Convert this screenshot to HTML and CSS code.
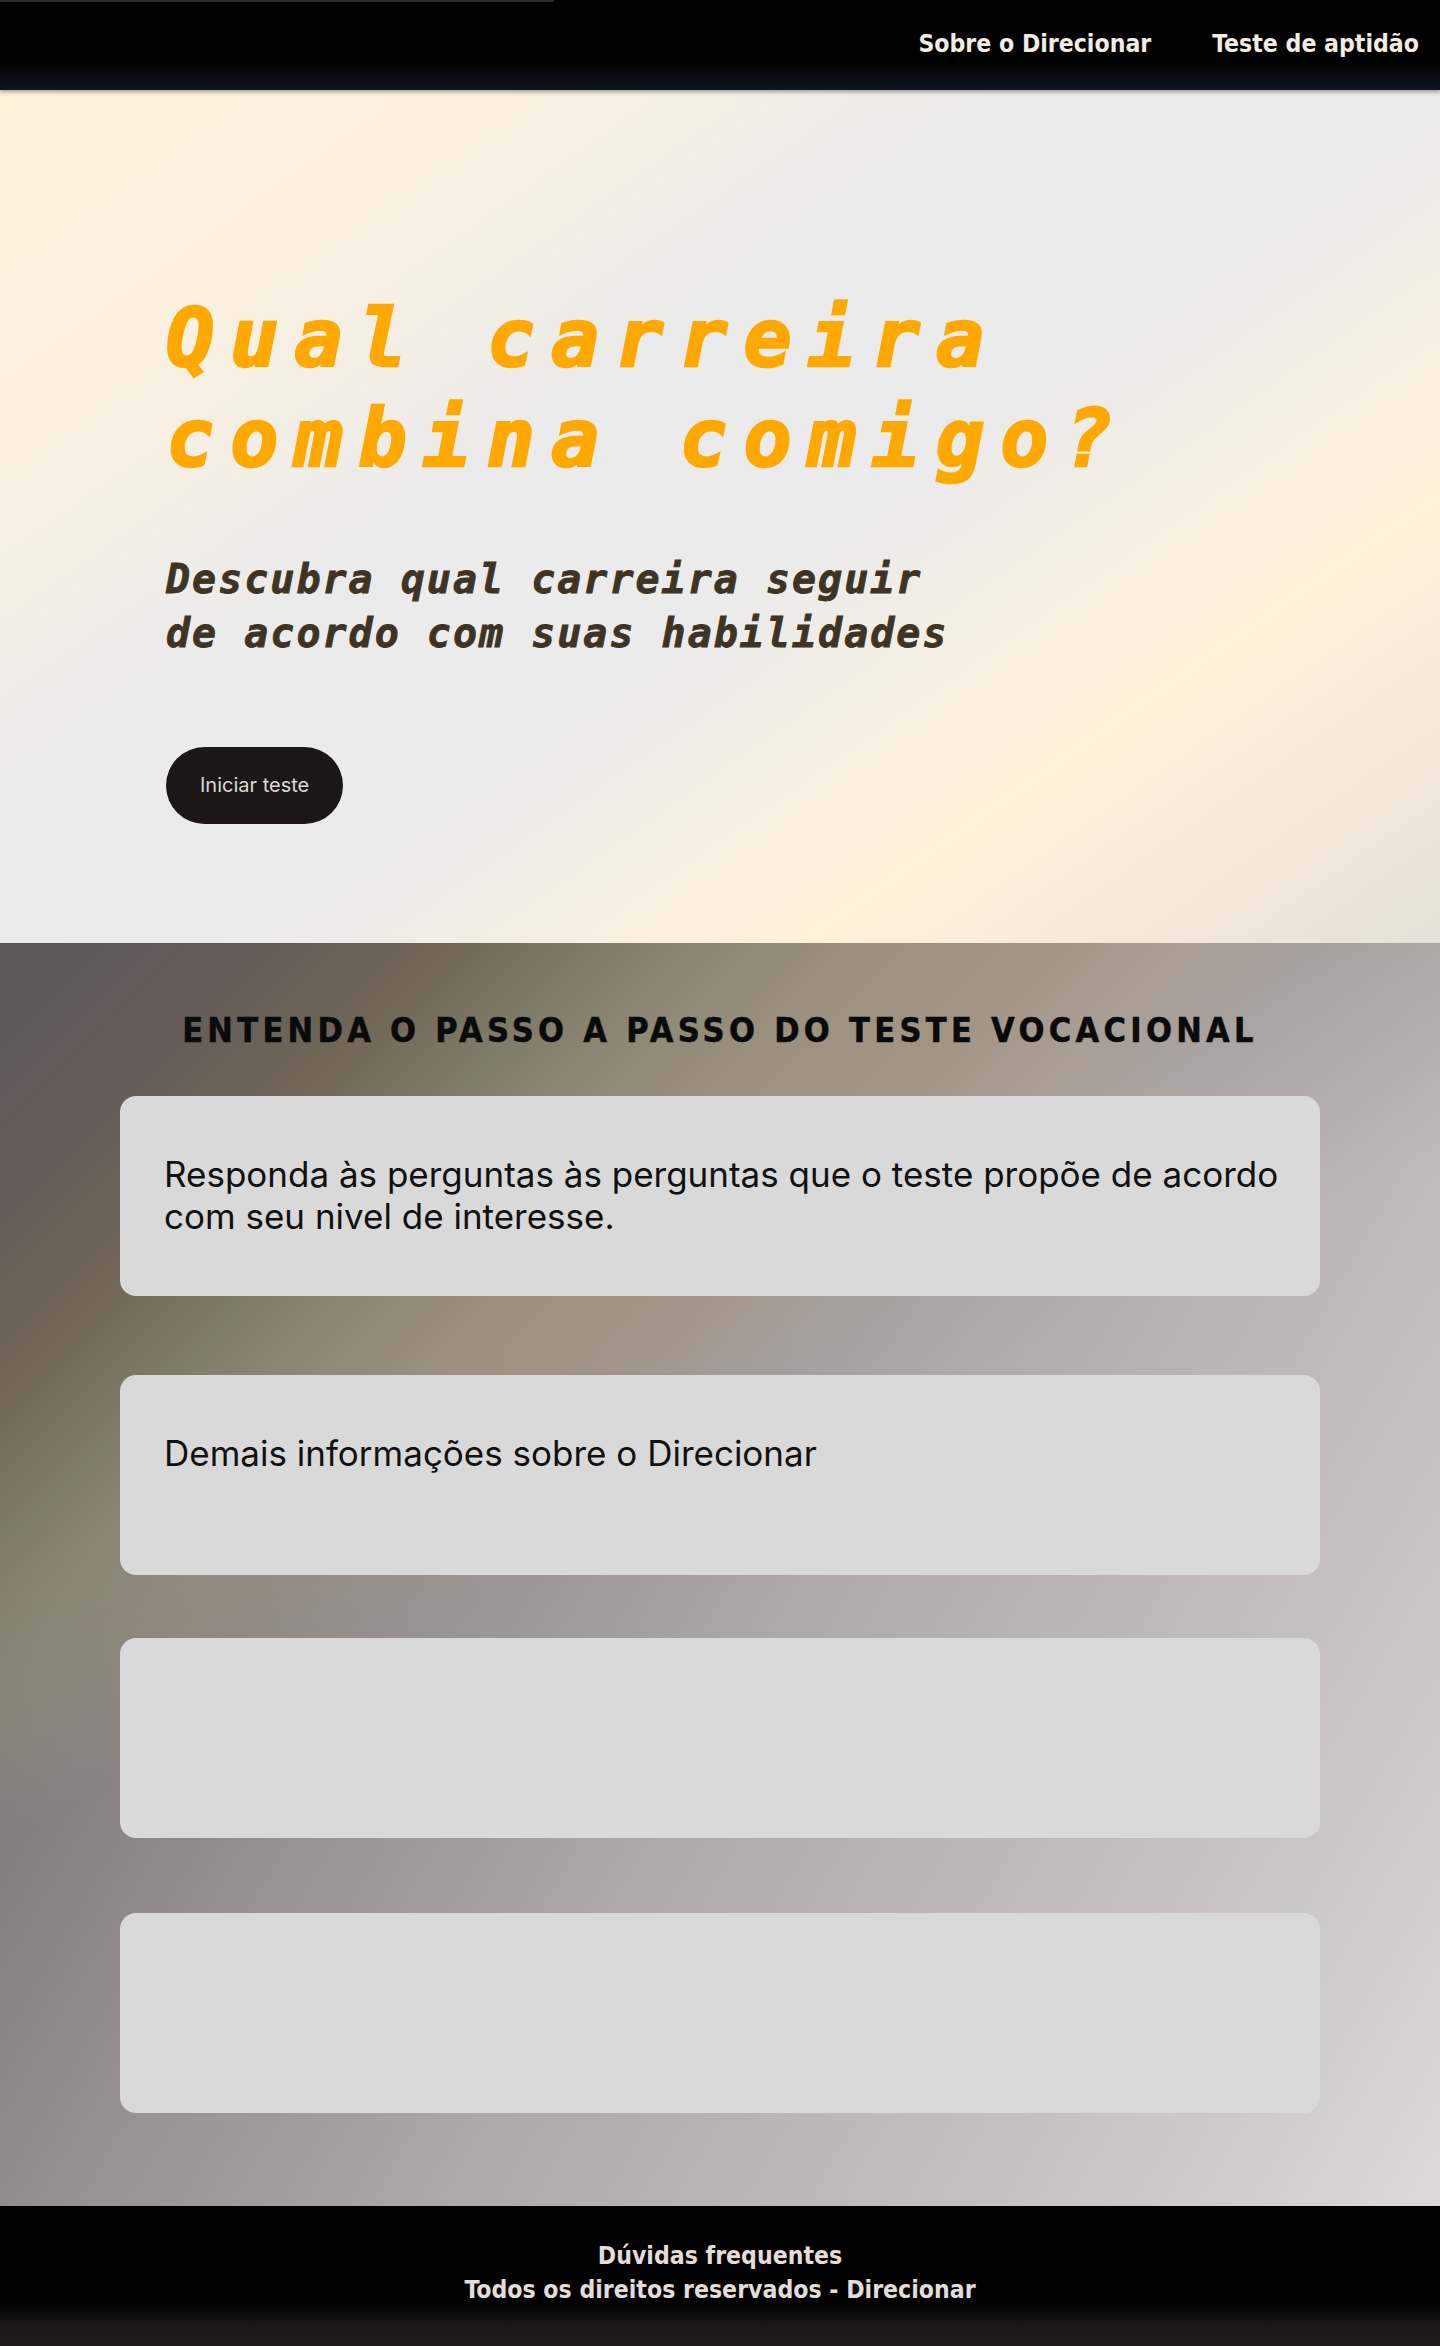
FILE: index.html
```html
<!DOCTYPE html>
<html lang="pt-BR">
<head>
    <meta charset="UTF-8">
    <meta name="viewport" content="width=device-width, initial-scale=1.0">
    <title>Direcionar - Teste vocacional</title>
    <link rel="stylesheet" href="styles.css">
</head>
<body>
    <header class="topbar">
        <div class="topbar-line"></div>
        <nav class="nav">
            <a href="#sobre">Sobre o Direcionar</a>
            <a href="#teste">Teste de aptidão</a>
        </nav>
    </header>

    <main>
        <section class="hero" id="teste">
            <h1 class="hero-title">Qual carreira<br>combina comigo?</h1>
            <p class="hero-sub">Descubra qual carreira seguir<br>de acordo com suas habilidades</p>
            <a class="btn-start" href="#">Iniciar teste</a>
        </section>

        <section class="steps" id="sobre">
            <h2>ENTENDA O PASSO A PASSO DO TESTE VOCACIONAL</h2>
            <div class="step-list">
                <div class="step">
                    <p>Responda às perguntas às perguntas que o teste propõe de acordo com seu nivel de interesse.</p>
                </div>
                <div class="step">
                    <p>Demais informações sobre o Direcionar</p>
                </div>
                <div class="step"></div>
                <div class="step"></div>
            </div>
        </section>
    </main>

    <footer class="footer">
        <p>Dúvidas frequentes</p>
        <p>Todos os direitos reservados - Direcionar</p>
    </footer>
</body>
</html>
```

FILE: styles.css
```css
* {
    box-sizing: border-box;
    margin: 0;
    padding: 0;
}

body {
    font-family: Inter, "Noto Sans", sans-serif;
    background-color: #000;
}

a {
    color: inherit;
    text-decoration: none;
}

/* cabeçalho */
.topbar {
    height: 90px;
    background: linear-gradient(to bottom, #000 0%, #000 68%, #0e1620 100%);
    box-shadow: 0 2px 4px rgba(0, 0, 0, 0.35);
    position: relative;
    z-index: 1;
}

.topbar-line {
    width: 554px;
    height: 2px;
    background-color: #2a2a2a;
}

.nav {
    display: flex;
    justify-content: flex-end;
    gap: 61px;
    padding: 27px 21px 0 0;
}

.nav a,
.footer p {
    font-family: "DejaVu Sans Condensed", "DejaVu Sans", sans-serif;
    font-stretch: condensed;
    font-weight: bold;
    font-size: 24.6px;
}

.nav a {
    color: #f2ece2;
}

/* hero */
.hero {
    display: flex;
    flex-direction: column;
    align-items: flex-start;
    padding: 199px 0 119px 166px;
    background: linear-gradient(145deg,
        #fff3dc 0%,
        #fdf2de 15%,
        #f3eee5 29%,
        #ebebeb 38%,
        #ebebeb 55%,
        #fff2da 76%,
        #e6e0d8 100%);
}

.hero-title {
    font-family: "DejaVu Sans Mono", monospace;
    font-style: italic;
    font-weight: bold;
    font-size: 80px;
    line-height: 100px;
    letter-spacing: 16px;
    color: #ffa900;
    -webkit-text-stroke: 2.5px #ffa900;
}

.hero-sub {
    margin-top: 63px;
    font-family: "DejaVu Sans Mono", monospace;
    font-style: italic;
    font-weight: bold;
    font-size: 40px;
    line-height: 54px;
    letter-spacing: 2px;
    color: #3f3424;
    -webkit-text-stroke: 0.8px #3f3424;
}

.btn-start {
    margin-top: 87px;
    height: 77px;
    padding: 0 34px;
    line-height: 77px;
    border-radius: 40px;
    background-color: #1a1716;
    color: #ddd8d3;
    font-size: 20px;
}

/* passo a passo */
.steps {
    position: relative;
    isolation: isolate;
    padding: 67px 0 93px;
    background: linear-gradient(120deg,
        #5e5757 0%,
        #7d7979 20%,
        #868282 27%,
        #979393 38%,
        #a19d9d 46%,
        #aeaaaa 55%,
        #b9b5b5 67%,
        #c6c2c2 80%,
        #cecbcb 89%,
        #dcdad9 100%);
}

/* faixa quente do canto superior */
.steps::before {
    content: "";
    position: absolute;
    inset: 0;
    z-index: -1;
    background: linear-gradient(135deg,
        #5e5656 0%,
        #625959 5%,
        #675e58 11%,
        #716858 17%,
        #807a68 22%,
        #908a76 28%,
        #9c917f 33%,
        #a39585 39%,
        #a99f96 44%,
        #a8a1a0 50%,
        #aaa4a4 55%,
        #aaa4a4 100%);
    -webkit-mask-image: linear-gradient(154deg, #000 0%, #000 33%, transparent 46%);
    mask-image: linear-gradient(154deg, #000 0%, #000 33%, transparent 46%);
}

.steps h2 {
    font-family: "DejaVu Sans Condensed", "DejaVu Sans", sans-serif;
    font-stretch: condensed;
    font-weight: bold;
    font-size: 34px;
    line-height: 40px;
    letter-spacing: 4.3px;
    text-align: center;
    color: #0a0a0a;
    -webkit-text-stroke: 0.5px #0a0a0a;
}

.step-list {
    width: 1200px;
    margin: 46px auto 0;
}

.step {
    height: 200px;
    padding: 57px 28px 57px 44px;
    border-radius: 16px;
    background-color: #d9d9d9;
}

.step:nth-child(2) {
    margin-top: 79px;
}

.step:nth-child(3) {
    margin-top: 63px;
}

.step:nth-child(4) {
    margin-top: 75px;
}

.step p {
    font-size: 35px;
    line-height: 42px;
    color: #111;
}

/* rodapé */
.footer {
    height: 140px;
    padding-top: 33px;
    text-align: center;
    background: linear-gradient(to bottom, #000 0%, #000 70%, #1a1917 86%, #1d1c1a 100%);
}

.footer p {
    line-height: 34px;
    color: #e2ddd8;
}
```
